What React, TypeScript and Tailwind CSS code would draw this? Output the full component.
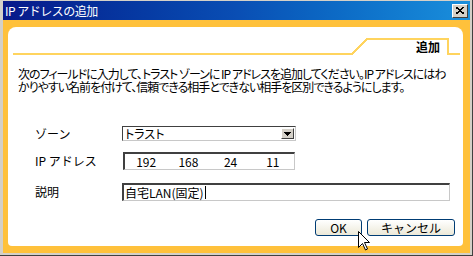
import React from 'react';

const font = "font-['Noto_Sans_CJK_JP',sans-serif]";

const TabOutline: React.FC = () => (
  <svg width="455" height="30" className="absolute left-0 top-0" shapeRendering="crispEdges">
    <polyline
      points="5,27 344,27 359,12 440,12 440,27 452,27"
      fill="none"
      stroke="#ffd45e"
      strokeWidth="2"
    />
  </svg>
);

const Cursor: React.FC = () => (
  <svg width="13" height="20" viewBox="0 0 13 20" className="absolute left-[358px] top-[231px]">
    <path
      d="M0.5 0.5 L0.5 16.5 L4.5 12.5 L7.5 19 L9.5 18 L6.5 11.5 L11.5 11.5 Z"
      fill="#ffffff"
      stroke="#000000"
      strokeWidth="1"
      strokeLinejoin="miter"
    />
  </svg>
);

export default function App() {
  const ipParts = ['192', '168', '24', '11'];

  return (
    <div
      className={`relative w-[473px] h-[256px] overflow-hidden bg-[#d4d0c8] border-r border-b border-[#404040] pl-[3px] pt-px pr-[2px] pb-[2px] flex flex-col ${font} text-[12px] text-black`}
    >
      {/* Title bar */}
      <div className="h-[19px] shrink-0 flex items-center justify-between pl-[2px] pr-[2px] bg-gradient-to-r from-[#08188a] via-[#0a4eb4] to-[#1a8fdc]">
        <span className="text-white text-[12px] leading-none tracking-[-0.5px]">IP アドレスの追加</span>
        <div className="w-[16px] h-[14px] bg-[#d4d0c8] border-t border-l border-white border-r border-b border-r-[#404040] border-b-[#404040] flex items-center justify-center">
          <svg width="8" height="7" viewBox="0 0 8 7" shapeRendering="crispEdges">
            <path d="M0 0 L8 7 M8 0 L0 7" stroke="#000" strokeWidth="1.6" />
          </svg>
        </div>
      </div>

      {/* Orange frame */}
      <div className="flex-1 min-h-0 flex bg-[#ffc13b] pl-[5px] pt-[7px] pr-[7px] pb-[7px]">
        <div className="relative flex-1 min-w-0 overflow-hidden flex flex-col bg-white rounded-tl-[8px] rounded-tr-[8px] rounded-bl-[4px] rounded-br-[4px]">
          {/* Tab header */}
          <div className="relative h-[30px] shrink-0">
            <TabOutline />
            <span className="absolute left-[408px] top-[12px] leading-[15px] font-bold text-[12px]">追加</span>
          </div>

          {/* Description */}
          <div className="mt-[10px] pl-[10px] leading-[13px] text-[12px] tracking-[-1px] [font-feature-settings:'palt'] whitespace-nowrap">
            <p>次のフィールドに入力して、トラスト ゾーンに IP アドレスを追加してください。IP アドレスにはわ</p>
            <p>かりやすい名前を付けて、信頼できる相手とできない相手を区別できるようにします。</p>
          </div>

          {/* Zone */}
          <div className="mt-[33px] h-[15px] flex items-center">
            <span className="w-[114px] pl-[27px] leading-none">ゾーン</span>
            <div className="w-[174px] h-[15px] flex items-center justify-between border-t border-l border-t-[#404040] border-l-[#404040] border-r border-b border-r-[#c8c8c8] border-b-[#c8c8c8] pl-[2px] pr-px">
              <span className="leading-none [font-feature-settings:'palt']">トラスト</span>
              <div className="w-[13px] h-[11px] bg-[#d4d0c8] border-t border-l border-white border-r border-b border-r-[#404040] border-b-[#404040] flex items-center justify-center">
                <svg width="7" height="4" viewBox="0 0 7 4" shapeRendering="crispEdges">
                  <path d="M0 0 H7 L3.5 4 Z" fill="#000" />
                </svg>
              </div>
            </div>
          </div>

          {/* IP address */}
          <div className="mt-[11px] h-[18px] flex items-center">
            <span className="w-[115px] pl-[27px] leading-none">IP アドレス</span>
            <div className="w-[172px] h-[18px] grid grid-cols-4 items-center border-t-2 border-l-2 border-t-[#404040] border-l-[#404040] border-r border-b border-r-[#c8c8c8] border-b-[#c8c8c8]">
              {ipParts.map((p) => (
                <span key={p} className="text-center leading-none">
                  {p}
                </span>
              ))}
            </div>
          </div>

          {/* Description field */}
          <div className="mt-[13px] h-[18px] flex items-center">
            <span className="w-[114px] pl-[27px] leading-none">説明</span>
            <div className="w-[328px] h-[18px] flex items-center border-t-2 border-l-2 border-t-[#404040] border-l-[#404040] border-r border-b border-r-[#c8c8c8] border-b-[#c8c8c8] pl-px">
              <span className="leading-none">自宅LAN(固定)</span>
              <span className="w-px h-[13px] bg-black ml-px" />
            </div>
          </div>

          {/* Buttons */}
          <div className="mt-[18px] flex justify-end gap-[5px] pr-[8px]">
            <button className="w-[47px] h-[17px] rounded-[3px] border border-[#003c74] bg-gradient-to-b from-white to-[#ece9d8] flex items-center justify-center leading-none text-[12px]">
              OK
            </button>
            <button className="w-[88px] h-[17px] rounded-[3px] border border-[#003c74] bg-gradient-to-b from-white to-[#ece9d8] flex items-center justify-center leading-none text-[12px]">
              キャンセル
            </button>
          </div>
        </div>
      </div>

      <Cursor />
    </div>
  );
}
